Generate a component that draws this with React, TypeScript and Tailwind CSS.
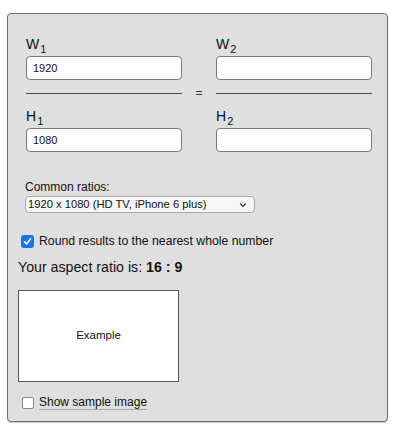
import React from "react";

const font = { fontFamily: '"Liberation Sans", Arial, sans-serif' };

function Label({ letter, sub }: { letter: string; sub: string }) {
  return (
    <div className="h-[17px] text-[14px] leading-[17px] text-[#111] whitespace-nowrap">
      {letter}
      <span className="text-[11px] leading-none relative top-[4px] ml-[1px]">{sub}</span>
    </div>
  );
}

function Field({ value }: { value: string }) {
  return (
    <div className="w-[156px] h-[24px] bg-white border border-[#7a7a7a] rounded-[4px] px-[6px] flex items-center text-[11px] text-[#111]">
      {value}
    </div>
  );
}

function Column({ n, w, h }: { n: string; w: string; h: string }) {
  return (
    <div className="flex flex-col">
      <Label letter="W" sub={n} />
      <div className="mt-[3px]"><Field value={w} /></div>
      <div className="mt-[13px] h-px bg-[#4d4d4d] w-[156px]" />
      <div className="mt-[14px]"><Label letter="H" sub={n} /></div>
      <div className="mt-[3px]"><Field value={h} /></div>
    </div>
  );
}

export default function App() {
  return (
    <div className="w-[400px] h-[426px] bg-white pt-[13px] pl-[7px]" style={font}>
      <div className="w-[381px] h-[409px] bg-[#dfdfdf] border border-[#6e6e6e] rounded-[4px] shadow-[0_1px_1px_rgba(0,0,0,0.2)] pl-[10px] pt-[22px]">
        <div className="pl-[8px] flex items-start">
          <Column n="1" w="1920" h="1080" />
          <div className="w-[34px] pt-[51px] text-center text-[12px] leading-[12px] text-[#333]">=</div>
          <Column n="2" w="" h="" />
        </div>

        <div className="pl-[7px] mt-[28px] text-[12px] leading-[15px] text-[#111]">Common ratios:</div>
        <div className="ml-[7px] mt-[1px] w-[230px] h-[17px] bg-[#f6f6f6] border border-[#a9a9a9] rounded-[4px] flex items-center justify-between pl-[2px] pr-[7px] text-[11.2px] text-[#111]">
          <span>1920 x 1080 (HD TV, iPhone 6 plus)</span>
          <svg width="8" height="6" viewBox="0 0 8 6" fill="none">
            <path d="M1.2 1.5 L4 4.3 L6.8 1.5" stroke="#333" strokeWidth="1.2" />
          </svg>
        </div>

        <div className="mt-[21px] pl-[3px] flex items-center gap-[5px] text-[12.25px] leading-[15px] text-[#111]">
          <span className="w-[13px] h-[13px] rounded-[3px] bg-[#1a73e8] flex items-center justify-center">
            <svg width="9" height="9" viewBox="0 0 9 9" fill="none">
              <path d="M1.5 4.8 L3.6 7 L7.6 1.8" stroke="white" strokeWidth="1.6" strokeLinecap="round" strokeLinejoin="round" />
            </svg>
          </span>
          <span>Round results to the nearest whole number</span>
        </div>

        <div className="mt-[10px] text-[14.2px] leading-[17px] text-[#111]">
          Your aspect ratio is: <b className="font-bold">16 : 9</b>
        </div>

        <div className="mt-[14px] w-[161px] h-[92px] bg-white border border-[#555] flex items-center justify-center text-[11.5px] text-[#111]">
          Example
        </div>

        <div className="mt-[13px] pl-[4px] flex items-center gap-[5px] text-[12px] leading-[15px] text-[#111]">
          <span className="w-[12px] h-[12px] rounded-[2px] bg-white border border-[#8a8a8a]" />
          <span className="underline decoration-[#aaa] underline-offset-[3px]">Show sample image</span>
        </div>
      </div>
    </div>
  );
}
